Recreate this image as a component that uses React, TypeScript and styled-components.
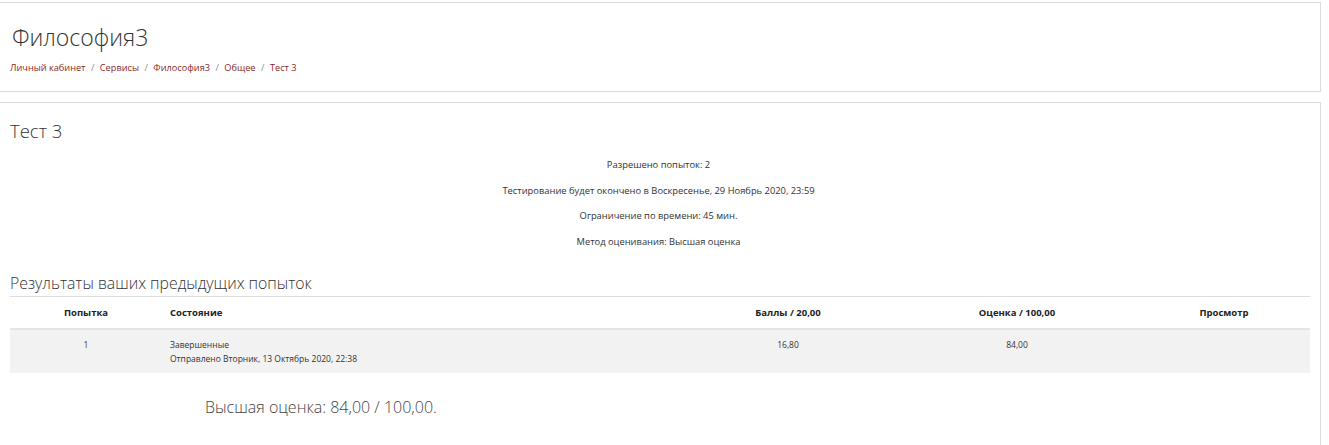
import React from "react";
import styled, { createGlobalStyle } from "styled-components";

const GlobalStyle = createGlobalStyle`
  body {
    margin: 0;
    background: #fff;
    font-family: "Open Sans", "Noto Sans", sans-serif;
    color: #333;
  }
`;

const crumbs = ["Личный кабинет", "Сервисы", "Философия3", "Общее", "Тест 3"];

const info = [
  "Разрешено попыток: 2",
  "Тестирование будет окончено в Воскресенье, 29 Ноябрь 2020, 23:59",
  "Ограничение по времени: 45 мин.",
  "Метод оценивания: Высшая оценка",
];

const App: React.FC = () => {
  return (
    <>
      <GlobalStyle />
      <Page>
        <HeaderCard>
          <PageTitle>Философия3</PageTitle>
          <Breadcrumb>
            {crumbs.map((c, i) => (
              <React.Fragment key={c}>
                {i > 0 && <Separator>/</Separator>}
                <Crumb href="#">{c}</Crumb>
              </React.Fragment>
            ))}
          </Breadcrumb>
        </HeaderCard>
        <MainCard>
          <QuizTitle>Тест 3</QuizTitle>
          <InfoBox>
            {info.map((line) => (
              <InfoLine key={line}>{line}</InfoLine>
            ))}
          </InfoBox>
          <SectionTitle>Результаты ваших предыдущих попыток</SectionTitle>
          <Table>
            <HeadRow>
              <Cell $center>Попытка</Cell>
              <Cell>Состояние</Cell>
              <Cell $center>Баллы / 20,00</Cell>
              <Cell $center>Оценка / 100,00</Cell>
              <Cell $center>Просмотр</Cell>
            </HeadRow>
            <BodyRow>
              <Cell $center>1</Cell>
              <Cell>
                <div>Завершенные</div>
                <div>Отправлено Вторник, 13 Октябрь 2020, 22:38</div>
              </Cell>
              <Cell $center>16,80</Cell>
              <Cell $center>84,00</Cell>
              <Cell $center></Cell>
            </BodyRow>
          </Table>
          <BestGrade>Высшая оценка: 84,00 / 100,00.</BestGrade>
        </MainCard>
      </Page>
    </>
  );
};

export default App;

const Page = styled.div`
  padding: 2px 8px 0 0;
  margin-left: -1px;
  display: flex;
  flex-direction: column;
  gap: 10px;
`;

const Card = styled.div`
  border: 1px solid #dcdcdc;
  background: #fff;
`;

const HeaderCard = styled(Card)`
  height: 88px;
  padding: 0 0 0 10px;
  display: flex;
  flex-direction: column;
`;

const PageTitle = styled.h1`
  margin: 19px 0 0 2px;
  font-size: 23px;
  font-weight: 300;
  line-height: 30px;
  color: #333;
`;

const Breadcrumb = styled.nav`
  margin-top: 9px;
  font-size: 9.2px;
  line-height: 14px;
  display: flex;
  align-items: center;
`;

const Crumb = styled.a`
  color: #8a1f1f;
  text-decoration: none;
`;

const Separator = styled.span`
  color: #888;
  padding: 0 5.5px;
`;

const MainCard = styled(Card)`
  height: 360px;
  padding: 0 10px 0 10px;
  border-bottom: none;
`;

const QuizTitle = styled.h2`
  margin: 15px 0 0 0;
  font-size: 18.5px;
  font-weight: 300;
  line-height: 26px;
  color: #333;
`;

const InfoBox = styled.div`
  margin-top: 14px;
  display: flex;
  flex-direction: column;
  align-items: center;
  gap: 11.7px;
  padding-right: 3px;
`;

const InfoLine = styled.p`
  margin: 0;
  font-size: 9.35px;
  line-height: 14px;
`;

const SectionTitle = styled.h3`
  margin: 21px 0 0 0;
  font-size: 15.8px;
  font-weight: 300;
  line-height: 26px;
  color: #333;
`;

const Table = styled.div`
  width: 1300px;
  font-size: 8.5px;
`;

const Row = styled.div`
  display: grid;
  grid-template-columns: 152px 518px 216px 242px 172px;
`;

const HeadRow = styled(Row)`
  border-top: 1px solid #dedede;
  border-bottom: 2px solid #e4e4e4;
  height: 31px;
  align-items: center;
  font-size: 9.5px;
  font-weight: 700;
  color: #222;
`;

const BodyRow = styled(Row)`
  background: #f2f2f2;
  height: 43px;
  padding-top: 8px;
  box-sizing: border-box;
  line-height: 14px;
`;

const Cell = styled.div<{ $center?: boolean }>`
  padding: 0 8px;
  text-align: ${(p) => (p.$center ? "center" : "left")};
`;

const BestGrade = styled.p`
  margin: 23px 0 0 195px;
  font-size: 16px;
  font-weight: 300;
  line-height: 22px;
  color: #444;
`;
